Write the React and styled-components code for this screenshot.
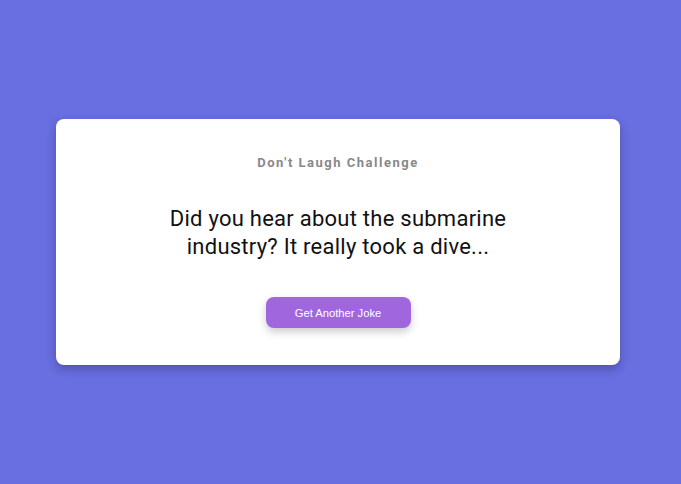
import React from "react"
import styled, { createGlobalStyle } from "styled-components"

const GlobalStyle = createGlobalStyle`
  html, body {
    margin: 0;
    padding: 0;
  }
  body {
    background: #696ee0;
    font-family: Roboto, 'Liberation Sans', sans-serif;
  }
`

const Page = styled.main`
  min-height: 484px;
  display: flex;
  align-items: center;
  justify-content: center;
  padding-right: 5px;
  box-sizing: border-box;
`

const Card = styled.section`
  width: 564px;
  box-sizing: border-box;
  background: #fff;
  border-radius: 8px;
  box-shadow: 0 4px 10px rgba(0, 0, 0, 0.25);
  padding: 36px 40px 37px;
  display: flex;
  flex-direction: column;
  align-items: center;
  text-align: center;
`

const Title = styled.h2`
  margin: 0;
  font-size: 13px;
  font-weight: 700;
  letter-spacing: 1.5px;
  color: #888;
`

const Joke = styled.p`
  margin: 35px 0 0;
  max-width: 360px;
  font-size: 22px;
  line-height: 28px;
  letter-spacing: 0.25px;
  color: #111;
`

const Button = styled.button`
  margin-top: 36px;
  width: 145px;
  height: 31px;
  border: none;
  border-radius: 8px;
  background: #a066de;
  color: #fff;
  font-family: 'Liberation Sans', Arial, sans-serif;
  font-size: 11.2px;
  box-shadow: 0 4px 8px rgba(0, 0, 0, 0.2);
  cursor: pointer;
`

export default function App () {
  return (
    <>
      <GlobalStyle />
      <Page>
        <Card>
          <Title>Don't Laugh Challenge</Title>
          <Joke>Did you hear about the submarine industry? It really took a dive...</Joke>
          <Button>Get Another Joke</Button>
        </Card>
      </Page>
    </>
  )
}

App.displayName = "App"
